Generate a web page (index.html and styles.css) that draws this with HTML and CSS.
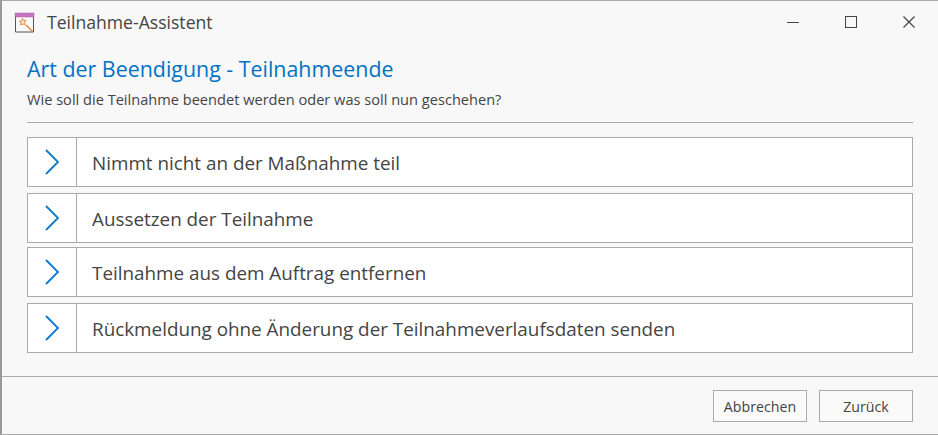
FILE: index.html
```html
<!DOCTYPE html>
<html lang="de">
<head>
    <meta charset="UTF-8">
    <title>Teilnahme-Assistent</title>
    <link rel="stylesheet" href="styles.css">
</head>
<body>
    <div class="window">
        <div class="titlebar">
            <svg class="app-icon" width="22" height="22" viewBox="0 0 22 22">
                <path d="M2.500 5v16h18V5" fill="#fafafa" stroke="#555"/>
                <rect x="2" y="2" width="19" height="4" fill="#c774c0" stroke="#a95ba6" stroke-width="0.5"/>
                <path d="M6.500 10.500l2-.5 1-2.500 1.200 2 2.300.2-1.500 1.800.5 2.300-2.200-.9-2 1.100.1-2.300z" fill="#fde3c8" stroke="#e8873a"/>
                <path d="M13 14l7 7" stroke="#e8873a" stroke-width="1.500"/>
            </svg>
            <span class="app-title">Teilnahme-Assistent</span>
            <div class="win-btns">
                <svg width="14" height="14" viewBox="0 0 14 14"><path d="M1 7.500h12" stroke="#444"/></svg>
                <svg width="14" height="14" viewBox="0 0 14 14"><rect x="1.500" y="1.500" width="11" height="11" fill="none" stroke="#444"/></svg>
                <svg width="14" height="14" viewBox="0 0 14 14"><path d="M1.500 1.500l11 11M12.500 1.500l-11 11" stroke="#444" stroke-width="1.200"/></svg>
            </div>
        </div>

        <div class="content">
            <h1>Art der Beendigung - Teilnahmeende</h1>
            <p class="subtitle">Wie soll die Teilnahme beendet werden oder was soll nun geschehen?</p>
            <div class="options">
                <div class="option">
                    <div class="arrow"><svg width="16" height="26" viewBox="0 0 16 26"><path d="M2 1l12 12L2 25" fill="none" stroke="#0a78cf" stroke-width="1.800"/></svg></div>
                    <div class="label">Nimmt nicht an der Maßnahme teil</div>
                </div>
                <div class="option">
                    <div class="arrow"><svg width="16" height="26" viewBox="0 0 16 26"><path d="M2 1l12 12L2 25" fill="none" stroke="#0a78cf" stroke-width="1.800"/></svg></div>
                    <div class="label">Aussetzen der Teilnahme</div>
                </div>
                <div class="option tight">
                    <div class="arrow"><svg width="16" height="26" viewBox="0 0 16 26"><path d="M2 1l12 12L2 25" fill="none" stroke="#0a78cf" stroke-width="1.800"/></svg></div>
                    <div class="label">Teilnahme aus dem Auftrag entfernen</div>
                </div>
                <div class="option">
                    <div class="arrow"><svg width="16" height="26" viewBox="0 0 16 26"><path d="M2 1l12 12L2 25" fill="none" stroke="#0a78cf" stroke-width="1.800"/></svg></div>
                    <div class="label">Rückmeldung ohne Änderung der Teilnahmeverlaufsdaten senden</div>
                </div>
            </div>
        </div>

        <div class="footer">
            <button>Abbrechen</button>
            <button>Zurück</button>
        </div>
    </div>
</body>
</html>
```
FILE: styles.css
```css
* {
    box-sizing: border-box;
}
body {
    margin: 0;
    font-family: 'Open Sans', 'Noto Sans', sans-serif;
    color: #444;
    background: #f8f8f8;
}
.window {
    width: 938px;
    height: 435px;
    display: flex;
    flex-direction: column;
    border-top: 1px solid #aaa;
    border-left: 2px solid #999;
    border-bottom: 1px solid #aaa;
    background: #f8f8f8;
}
.titlebar {
    height: 41px;
    display: flex;
    align-items: center;
    padding-left: 11px;
    flex-shrink: 0;
}
.app-icon {
    margin-right: 12px;
}
.app-title {
    font-size: 17.6px;
}
.win-btns {
    margin-left: auto;
    margin-right: 22px;
    display: flex;
    gap: 44px;
}
.content {
    flex: 1;
    padding: 0 25px;
}
h1 {
    margin: 13px 0 0;
    font-size: 21.4px;
    line-height: 28px;
    font-weight: 400;
    color: #0072c6;
}
.subtitle {
    margin: 7px 0 0;
    padding-bottom: 14px;
    font-size: 14.6px;
    line-height: 18px;
    border-bottom: 1px solid #aaa;
}
.options {
    margin-top: 14px;
    display: flex;
    flex-direction: column;
    gap: 6px;
}
.option {
    height: 50px;
    display: flex;
    align-items: stretch;
    background: #fff;
    border: 1px solid #aaa;
}
.option.tight {
    margin-top: -2px;
}
.arrow {
    width: 49px;
    display: flex;
    align-items: center;
    justify-content: center;
    border-right: 1px solid #aaa;
}
.label {
    display: flex;
    align-items: center;
    padding: 1px 0 0 15px;
    font-size: 18.85px;
}
.footer {
    height: 58px;
    flex-shrink: 0;
    display: flex;
    justify-content: flex-end;
    align-items: flex-start;
    gap: 12px;
    padding: 13px 25px 0 0;
    border-top: 1px solid #aaa;
}
button {
    width: 94px;
    height: 32px;
    padding: 0;
    font-family: inherit;
    font-size: 14.2px;
    color: #444;
    background: #fafafa;
    border: 1px solid #aaa;
}
```
